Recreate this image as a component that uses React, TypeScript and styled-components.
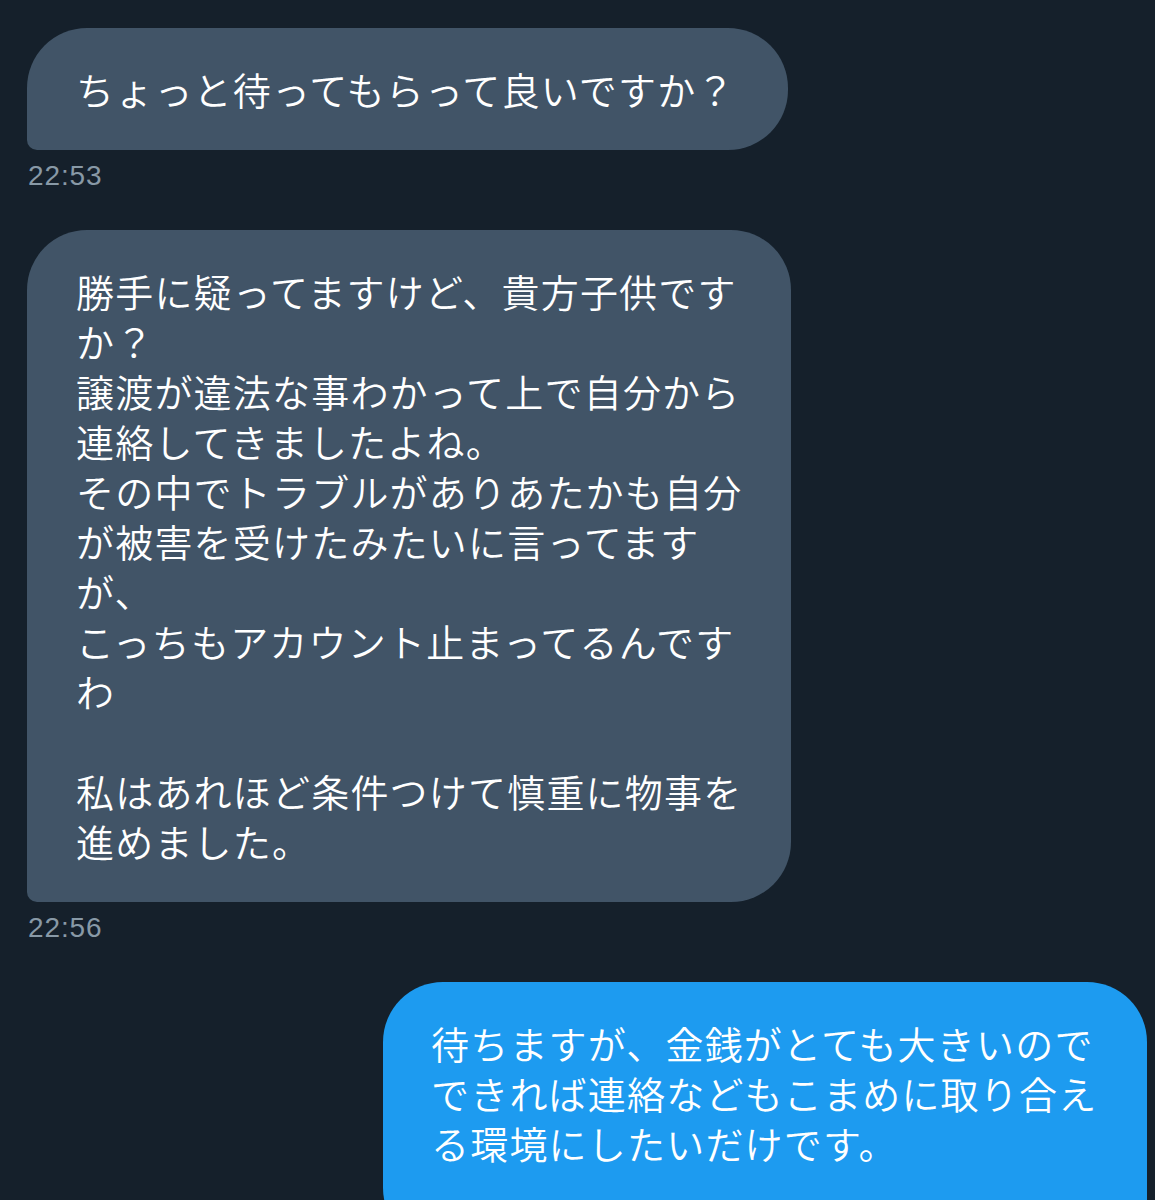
import React from "react";
import styled, { createGlobalStyle } from "styled-components";

const Global = createGlobalStyle`
  html, body {
    margin: 0;
    padding: 0;
    background: #15202b;
  }
  body {
    font-family: "Noto Sans CJK JP", "Noto Sans", sans-serif;
  }
`;

const Thread = styled.div`
  display: flex;
  flex-direction: column;
  padding: 28px 8px 0 27px;
  width: 1155px;
  height: 1200px;
  box-sizing: border-box;
  overflow: hidden;
`;

const Group = styled.div<{ $out?: boolean }>`
  display: flex;
  flex-direction: column;
  flex-shrink: 0;
  align-items: ${(p) => (p.$out ? "flex-end" : "flex-start")};
  margin-bottom: 39px;
`;

const Bubble = styled.div<{ $out?: boolean; $w: number }>`
  box-sizing: border-box;
  width: ${(p) => p.$w}px;
  padding: 36px 0 ${(p) => (p.$out ? 80 : 36)}px ${(p) => (p.$out ? 48 : 49)}px;
  background: ${(p) => (p.$out ? "#1d9bf0" : "#415467")};
  color: #ffffff;
  border-radius: ${(p) => (p.$out ? "60px 60px 10px 60px" : "60px 60px 60px 10px")};
  font-family: "Noto Sans CJK JP", sans-serif;
  font-size: 38px;
  letter-spacing: 1.2px;
  line-height: 50px;
  font-weight: 350;
  white-space: pre;
`;

const Time = styled.div`
  margin-top: 11px;
  padding-left: 1px;
  font-family: "Liberation Sans", Arial, sans-serif;
  font-size: 28px;
  line-height: 30px;
  color: #8899a6;
  letter-spacing: 0.9px;
`;

const msgs = [
  {
    out: false,
    w: 761,
    text: "ちょっと待ってもらって良いですか？",
    time: "22:53",
  },
  {
    out: false,
    w: 764,
    text:
      "勝手に疑ってますけど、貴方子供です\nか？\n譲渡が違法な事わかって上で自分から\n連絡してきましたよね。\nその中でトラブルがありあたかも自分\nが被害を受けたみたいに言ってます\nが、\nこっちもアカウント止まってるんです\nわ\n\u00a0\n私はあれほど条件つけて慎重に物事を\n進めました。",
    time: "22:56",
  },
  {
    out: true,
    w: 764,
    text:
      "待ちますが、金銭がとても大きいので\nできれば連絡などもこまめに取り合え\nる環境にしたいだけです。",
    time: "",
  },
];

export default function App() {
  return (
    <>
      <Global />
      <Thread>
        {msgs.map((m, i) => (
          <Group key={i} $out={m.out}>
            <Bubble $out={m.out} $w={m.w}>
              {m.text}
            </Bubble>
            {m.time && <Time>{m.time}</Time>}
          </Group>
        ))}
      </Thread>
    </>
  );
}
